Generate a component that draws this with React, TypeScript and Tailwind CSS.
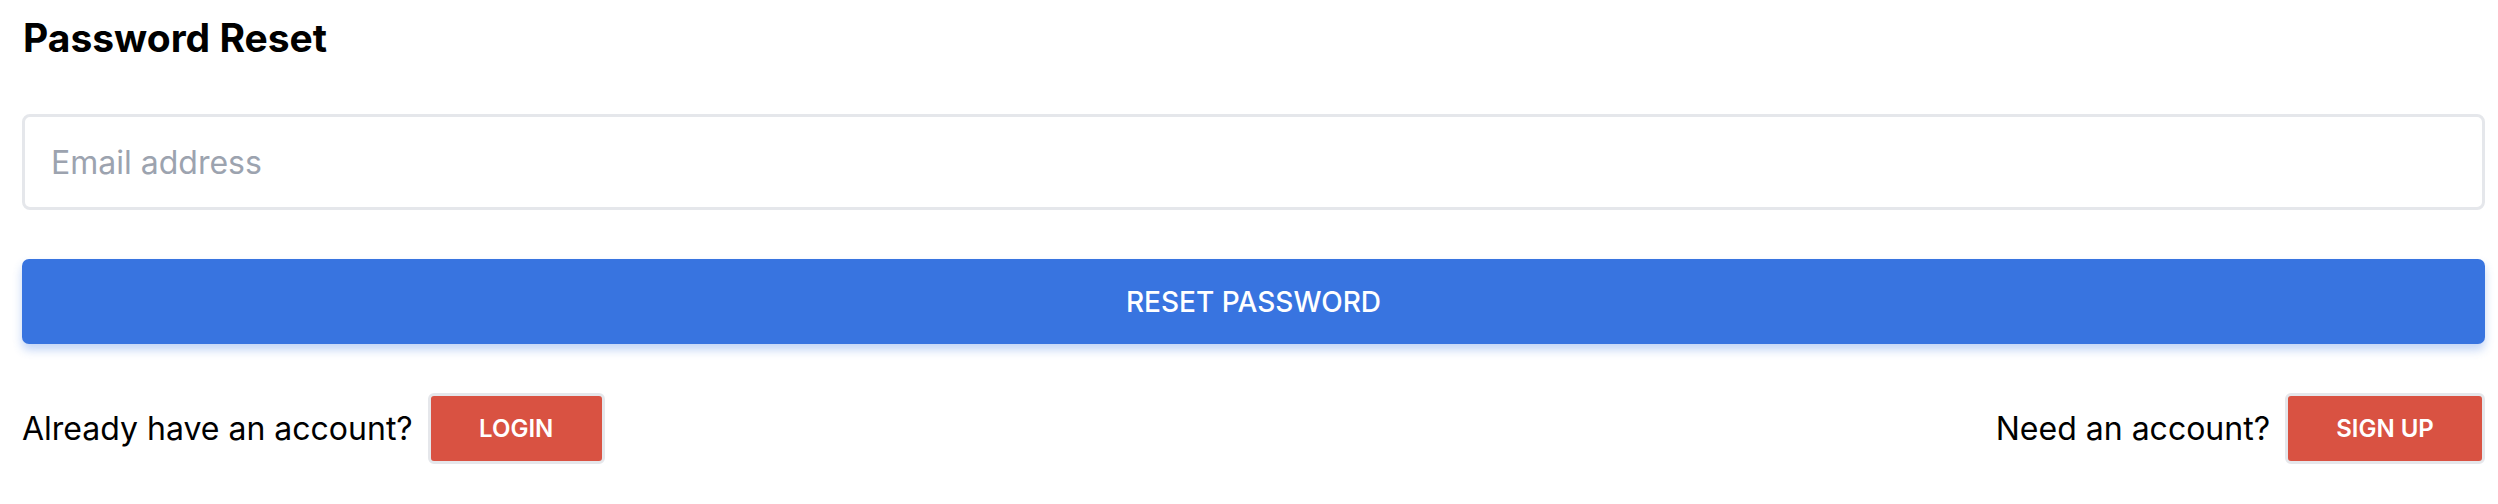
export default function App() {
  return (
    <div className="min-h-screen bg-white font-['Inter',sans-serif] text-black">
      <div className="pl-[22px] pr-[13px] pt-[14px]">
        <h1 className="text-[39px] font-bold leading-[48px] pl-[1px]">Password Reset</h1>

        <input
          type="email"
          placeholder="Email address"
          className="mt-[52px] block h-[96px] w-full rounded-[8px] border-[3px] border-[#e5e7eb] px-[26px] text-[32px] text-gray-900 outline-none placeholder:text-[#9ca3af]"
        />

        <button className="mt-[49px] block h-[85px] w-full rounded-[7px] bg-[#3874e0] text-[28px] font-medium uppercase text-white shadow-[0_6px_10px_rgba(56,116,224,0.3)]">
          Reset Password
        </button>

        <div className="mt-[49px] flex items-center justify-between">
          <div className="flex items-center gap-[15px]">
            <span className="text-[32px]">Already have an account?</span>
            <button className="h-[71px] w-[177px] rounded-[6px] border-[3px] border-[#e5e7eb] bg-[#d95242] text-[24px] font-semibold uppercase text-white">
              Login
            </button>
          </div>
          <div className="flex items-center gap-[15px]">
            <span className="text-[32px]">Need an account?</span>
            <button className="h-[71px] w-[200px] rounded-[6px] border-[3px] border-[#e5e7eb] bg-[#d95242] text-[24px] font-semibold uppercase text-white">
              Sign up
            </button>
          </div>
        </div>
      </div>
    </div>
  )
}
